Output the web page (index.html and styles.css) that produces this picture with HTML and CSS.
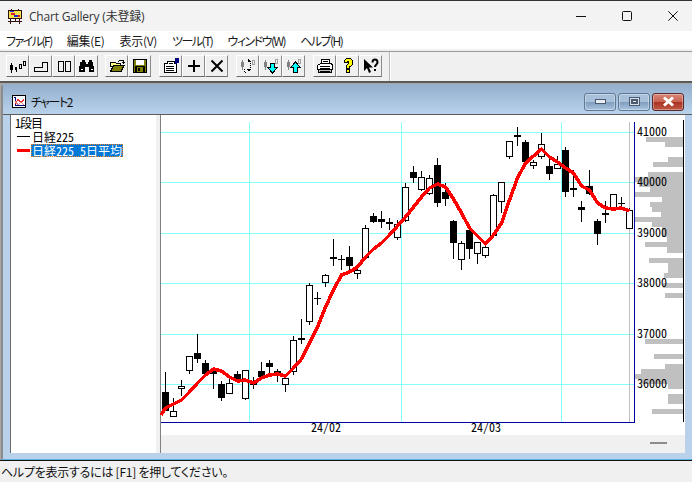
FILE: index.html
```html
<!DOCTYPE html>
<html lang="ja">
<head>
<meta charset="utf-8">
<title>Chart Gallery</title>
<link rel="stylesheet" href="styles.css">
</head>
<body>
<div class="app">
  <header class="titlebar">
    <svg class="app-icon" width="16" height="16" viewBox="0 0 16 16" shape-rendering="crispEdges"><path fill="#f4e04a" d="M2 3h12v7H2z"/><path fill="#e02020" d="M4 5h4v2H4zM10 7h3v2h-3z"/><path fill="#2030d0" d="M7 7h4v2H7zM3 3h4v1H3z"/><path fill="none" stroke="#301010" d="M1.500 2.500h13v8h-13zM4.500.5v2M11.500.5v2M3.500 10.500v5M12.500 10.500v5M1 13.500h14M8 10.500v3"/></svg>
    <span class="app-title">Chart Gallery (未登録)</span>
    <div class="window-controls">
      <span class="win-btn"><svg width="10" height="10" viewBox="0 0 10 10"><path d="M0 5.500h10" stroke="#111"/></svg></span>
      <span class="win-btn"><svg width="10" height="10" viewBox="0 0 10 10"><rect x=".5" y=".5" width="9" height="9" rx="1" fill="none" stroke="#111"/></svg></span>
      <span class="win-btn"><svg width="10" height="10" viewBox="0 0 10 10"><path d="M.3.300l9.400 9.400M9.700.300L.3 9.700" stroke="#111"/></svg></span>
    </div>
  </header>

  <nav class="menubar">
    <span class="menu-kana">ファイル(F)</span><span>編集(E)</span><span>表示(V)</span><span class="menu-kana">ツール(T)</span><span class="menu-kana">ウィンドウ(W)</span><span class="menu-kana">ヘルプ(H)</span>
  </nav>

  <div class="toolbar">
    <div class="tool-group tool-group-first">
      <span class="tool"><svg width="16" height="16" viewBox="0 0 16 16" shape-rendering="crispEdges"><path d="M1 5h1v2h1v5H2v3H1v-3H0V7h1zM5 9h2v3H5zM5.500 12v2h1v-2z"/><path fill="none" stroke="#000" d="M9.500 6.500h2v4h-2zM13.500 3.500h2v4h-2z"/></svg></span>
      <span class="tool"><svg width="16" height="16" viewBox="0 0 16 16" shape-rendering="crispEdges"><path fill="none" stroke="#000" d="M1.500 13.500h13v-9h-5v5h-8z"/></svg></span>
      <span class="tool"><svg width="16" height="16" viewBox="0 0 16 16" shape-rendering="crispEdges"><path fill="none" stroke="#000" d="M2.500 3.500h5v10h-5zM9.500 3.500h5v10h-5z"/></svg></span>
      <span class="tool"><svg width="16" height="16" viewBox="0 0 16 16" shape-rendering="crispEdges"><path d="M3 2h3v2h1v2h2V4h1V2h3v2h1v4h1v6H10V9H6v5H0V8h1V4h2z"/><path fill="#fff" d="M2 11h2v1H2zM12 11h2v1h-2z"/></svg></span>
    </div>
    <div class="tool-group">
      <span class="tool"><svg width="16" height="16" viewBox="0 0 16 16" shape-rendering="crispEdges"><path fill="#ffff80" stroke="#000" d="M1.500 4.500h5l1 1h4v3h-10z"/><path fill="#808000" stroke="#000" d="M1.500 13.500l3-6h10.500l-3 6z"/><path fill="none" stroke="#000" d="M9.500 3.500l2-1.500h2l1 1v2M13 4l1.500 1.500L16 4"/></svg></span>
      <span class="tool"><svg width="16" height="16" viewBox="0 0 16 16" shape-rendering="crispEdges"><path d="M1 1h14v14H1z"/><path fill="#808000" d="M2 2h12v12H2z"/><path fill="#fff" d="M4 2h8v5H4z"/><path d="M3 8h10v6H3z"/><path fill="#808000" d="M5 9h6v5H5z"/><path d="M6 10h2v3H6z"/></svg></span>
    </div>
    <div class="tool-group">
      <span class="tool"><svg width="16" height="16" viewBox="0 0 16 16" shape-rendering="crispEdges"><path fill="#fff" stroke="#000" d="M1.500 5.500h3v-2h7v2h2v9h-12z"/><path stroke="#000" d="M3 8.500h8M3 10.500h8M3 12.500h8M6 5.500h4"/><path fill="#000080" d="M12 0h4v5h-2v1h-2z"/></svg></span>
      <span class="tool"><svg width="16" height="16" viewBox="0 0 16 16" shape-rendering="crispEdges"><path d="M7 2h2v5h5v2H9v5H7V9H2V7h5z"/></svg></span>
      <span class="tool"><svg width="16" height="16" viewBox="0 0 16 16"><path d="M2.500 2.500l11 11M13.500 2.500l-11 11" stroke="#000" stroke-width="2"/></svg></span>
    </div>
    <div class="tool-group">
      <span class="tool"><svg width="16" height="16" viewBox="0 0 16 16" shape-rendering="crispEdges"><path fill="#808080" d="M2 2h1v2h1v5H3v3H2V9H1V4h1z"/><path fill="none" stroke="#a0a0a0" d="M12.500 2.500h2v4h-2z"/><path fill="none" stroke="#000" stroke-dasharray="1 1" d="M7.500 3.500h2M10.500 5v5M4 10.500v3.500h3"/><path d="M8 1h1v1h1v1h1v1H8zM7 11h4l-2 3z"/></svg></span>
      <span class="tool"><svg width="16" height="16" viewBox="0 0 16 16" shape-rendering="crispEdges"><path fill="#808080" d="M2 2h1v2h1v5H3v3H2V9H1V4h1z"/><path fill="none" stroke="#a0a0a0" d="M12.500 1.500h2v4h-2z"/><path fill="#00ffff" stroke="#000" d="M7.500 5.500h4v4h3l-5 5.500-5-5.500h3z"/></svg></span>
      <span class="tool"><svg width="16" height="16" viewBox="0 0 16 16" shape-rendering="crispEdges"><path fill="#808080" d="M2 2h1v2h1v5H3v3H2V9H1V4h1z"/><path fill="none" stroke="#a0a0a0" d="M12.500 1.500h2v4h-2z"/><path fill="#00ffff" stroke="#000" d="M7.500 14.500h4v-5h3l-5-5.500-5 5.500h3z"/></svg></span>
    </div>
    <div class="tool-group">
      <span class="tool"><svg width="16" height="16" viewBox="0 0 16 16" shape-rendering="crispEdges"><path fill="#fff" stroke="#000" d="M4.500 1.500h8v4h-8zM.5 7.500l3-2h11l1 2v4h-15z"/><path fill="#c0c0c0" stroke="#000" d="M1.500 11.500h13v3h-13z"/><path stroke="#000" d="M6 3.500h5M3 8.500h10M3 10.500h10M3 13h10"/></svg></span>
      <span class="tool"><svg width="16" height="16" viewBox="0 0 16 16" shape-rendering="crispEdges"><path fill="#ffff00" stroke="#000" d="M4.500 2.500l2-2h4l2 2v4l-2 2h-1v2h-3v-3l2-2v-2h-1v1h-3zM6.500 11.500h3v3h-3z"/></svg></span>
      <span class="tool"><svg width="16" height="16" viewBox="0 0 16 16"><path d="M1 1v12l3-3 2 5 2-1-2-4.500h4z"/><path fill="none" stroke="#000" stroke-width="2" d="M9.500 4.500c0-4 5-4 5 0 0 2-2.500 2-2.500 4.500"/><rect x="11" y="11" width="2" height="2"/></svg></span>
    </div>
    <span class="tool-sep"></span>
  </div>

  <main class="mdi">
    <section class="child">
      <div class="child-title">
        <svg class="child-icon" width="14" height="13" viewBox="0 0 14 13" shape-rendering="crispEdges"><path fill="#fff" stroke="#000" d="M.5.500h13v12H.5z"/><path fill="none" stroke="#000080" d="M2 2.500h1v8h10"/><path fill="none" stroke="#e03030" d="M3 8.500l3-4 3 3 3-3"/><path fill="none" stroke="#e08080" d="M3 6.500l3 3 3-2 3 2"/></svg>
        <span class="child-name">チャート2</span>
        <div class="child-controls">
          <span class="cbtn"><i class="glyph glyph-min"></i></span>
          <span class="cbtn"><i class="glyph glyph-max"></i></span>
          <span class="cbtn cbtn-close"><svg width="13" height="11" viewBox="0 0 13 11"><path d="M2 1.500l9 8M11 1.500l-9 8" stroke="#fff" stroke-width="3"/></svg></span>
        </div>
      </div>
      <div class="child-body">
        <aside class="legend">
          <div class="legend-row"><span class="legend-head">1段目</span></div>
          <div class="legend-row"><i class="swatch"></i><span class="legend-name">日経225</span></div>
          <div class="legend-row"><i class="swatch swatch-ma"></i><span class="legend-name legend-selected">日経225 5日平均</span></div>
        </aside>
        <div class="splitter"></div>
        <svg class="chart" width="525" height="338" viewBox="160 115 525 338">
          <rect x="160" y="435" width="525" height="18" fill="#f0f0f0"/>
          <g shape-rendering="crispEdges">
            <path d="M650 443h17" stroke="#8c8c8c" stroke-width="2"/>
            <path fill="#c0c0c0" d="M646 137h37v5h-37zM665 142h18v5h-18zM668 157h15v5h-15zM653 162h30v5h-30zM648 172h35v5h-35zM634 177h49v5h-49zM639 182h44v5h-44zM650 187h33v5h-33zM634 192h49v5h-49zM662 197h21v5h-21zM650 202h33v5h-33zM652 207h31v5h-31zM661 212h22v5h-22zM634 217h49v5h-49zM652 222h31v5h-31zM662 227h21v10h-21zM667 237h16v5h-16zM645 242h38v5h-38zM667 247h16v6h-16zM649 258h34v5h-34zM668 263h15v10h-15zM664 273h19v5h-19zM663 283h20v5h-20zM665 293h18v5h-18zM645 339h38v5h-38zM654 354h29v5h-29zM665 364h18v5h-18zM641 369h42v5h-42zM635 374h48v5h-48zM641 379h42v5h-42zM668 384h15v5h-15zM668 394h15v10h-15zM652 409h31v5h-31z"/>
            <path stroke="#88ffff" d="M161 132.500h473M161 182.500h473M161 233.500h473M161 283.500h473M161 334.500h473M161 384.500h473M249.500 122v300M401.500 122v300M561.500 122v300"/>
            <path stroke="#c0c0c0" d="M629.500 122v300"/>
            <path fill="none" stroke="#0000a0" d="M634.500 122v300.500H161"/>
            <path stroke="#000" d="M683.500 120v302"/>
            <path stroke="#808080" d="M160.500 115v338"/>
            <path stroke="#000" d="M165.500 372v38M173.500 398v19M181.500 380v16M189.500 356v18M197.500 334v29M205.500 360v14M213.500 368v21M221.500 381v20M229.500 378v15M237.500 371v12M245.500 370v30M253.500 377v12M261.500 362v15M269.500 360v15M277.500 369v13M285.500 378v14M293.500 336v39M301.500 319v25M309.500 283v42M317.500 292v13M314 298.500h7M325.500 274v13M333.500 239v27M341.500 255v15M338 259.500h7M349.500 246v24M357.500 266v13M365.500 225v32M373.500 213v10M381.500 211v17M389.500 218v12M397.500 220v20M405.500 183v39M413.500 166v17M421.500 171v20M429.500 175v20M437.500 158v49M445.500 183v23M453.500 220v39M461.500 241v29M469.500 230v29M477.500 242v22M485.500 243v15M493.500 194v41M501.500 182v31M509.500 141v18M517.500 127v19M525.500 140v22M533.500 160v9M541.500 133v26M549.500 157v23M557.500 156v13M565.500 147v50M573.500 170v27M581.500 201v21M589.500 170v25M597.500 219v26M605.500 201v22M613.500 194v14M621.500 197v12M618 203.500h7M629.500 208v20"/>
            <path fill="#fff" stroke="#000" d="M170.500 411.500h6v5h-6zM178.500 386.500h6v2h-6zM186.500 356.500h6v14h-6zM226.500 383.500h6v10h-6zM242.500 370.500h6v28h-6zM282.500 378.500h6v6h-6zM290.500 340.500h6v31h-6zM306.500 285.500h6v36h-6zM322.500 275.500h6v7h-6zM354.500 270.500h6v3h-6zM362.500 228.500h6v29h-6zM394.500 224.500h6v13h-6zM402.500 187.500h6v33h-6zM418.500 177.500h6v12h-6zM426.500 178.500h6v15h-6zM458.500 243.500h6v16h-6zM474.500 242.500h6v11h-6zM482.500 247.500h6v8h-6zM490.500 195.500h6v40h-6zM498.500 182.500h6v19h-6zM506.500 141.500h6v15h-6zM530.500 162.500h6v3h-6zM538.500 144.500h6v12h-6zM554.500 164.500h6v4h-6zM610.500 194.500h6v14h-6zM626.500 210.500h6v18h-6z"/>
            <path fill="#000" d="M162 392h7v19h-7zM194 353h7v6h-7zM202 363h7v11h-7zM210 370h7v4h-7zM218 384h7v14h-7zM234 374h7v6h-7zM250 382h7v3h-7zM258 371h7v6h-7zM266 363h7v4h-7zM274 371h7v3h-7zM298 338h7v2h-7zM330 257h7v2h-7zM346 257h7v9h-7zM370 216h7v6h-7zM378 219h7v3h-7zM386 222h7v2h-7zM410 172h7v6h-7zM434 165h7v38h-7zM442 192h7v7h-7zM450 221h7v22h-7zM466 230h7v19h-7zM514 135h7v2h-7zM522 142h7v20h-7zM546 166h7v8h-7zM562 150h7v42h-7zM570 188h7v2h-7zM578 207h7v3h-7zM586 186h7v8h-7zM594 221h7v13h-7zM602 213h7v2h-7z"/>
            <polyline fill="none" stroke="#ff0000" stroke-width="3.500" points="161,415 165.500,408 173.500,404 181.500,400 189.500,392 197.500,383 205.500,375 213.500,369 221.500,371 229.500,377 237.500,381 245.500,380 253.500,383 261.500,378 269.500,375 277.500,374 285.500,376 293.500,368 301.500,359 309.500,343 317.500,327 325.500,307 333.500,290 341.500,275 349.500,272 357.500,267 365.500,257 373.500,249 381.500,243 389.500,235 397.500,226 405.500,217 413.500,207 421.500,197 429.500,188 437.500,184 445.500,187 453.500,199 461.500,213 469.500,228 477.500,236 485.500,244 493.500,235 501.500,223 509.500,200 517.500,178 525.500,163 533.500,156 541.500,149 549.500,157 557.500,162 565.500,168 573.500,173 581.500,186 589.500,190 597.500,203 605.500,208 613.500,209 621.500,208 629.500,211"/>
          </g>
          <g class="axis-text">
            <text x="637" y="136">41000</text><text x="637" y="186">40000</text><text x="637" y="237">39000</text><text x="637" y="287">38000</text><text x="637" y="338">37000</text><text x="637" y="388">36000</text>
            <text x="311" y="432">24/02</text><text x="471" y="432">24/03</text>
          </g>
        </svg>
      </div>
    </section>
  </main>

  <footer class="statusbar">ヘルプを表示するには [F1] を押してください。</footer>
</div>
</body>
</html>
```

FILE: styles.css
```css
* { box-sizing: border-box; }
html, body { margin: 0; height: 100%; overflow: hidden; }
body {
  font-family: "Noto Sans CJK JP", sans-serif;
  font-size: 12px;
  color: #1a1a1a;
  background: #f0f0f0;
}
.app { display: flex; flex-direction: column; width: 692px; height: 482px; overflow: hidden; }

.titlebar {
  display: flex; align-items: center; height: 31px; flex: none;
  border-top: 1px solid #333; background: #f3f3f3; padding-left: 7px;
}
.app-icon { flex: none; }
.app-title { margin: 0 0 1px 6px; color: #333; font-family: "Open Sans", "Noto Sans CJK JP", sans-serif; letter-spacing: -.2px; }
.window-controls { display: flex; margin-left: auto; margin-right: -4px; }
.win-btn { display: flex; align-items: center; justify-content: center; width: 46px; height: 30px; }

.menubar {
  display: flex; gap: 15px; align-items: center; flex: none;
  height: 18px; padding-left: 6px; background: #fff; white-space: nowrap;
  font-feature-settings: "palt"; letter-spacing: -.3px;
}
.menu-kana { letter-spacing: -1.5px; }

.toolbar {
  display: flex; flex: none; height: 34px; padding: 6px 0 0 6px;
  background: linear-gradient(#f0f0f0 2px, #999 2px, #999 3px, #f0f0f0 3px);
  border-bottom: 2px solid #5a5a5a;
}
.tool-group { display: flex; margin-right: 8px; height: 22px; }
.tool-group-first { margin-right: 7px; }
.tool {
  display: flex; align-items: center; justify-content: center;
  width: 23px; height: 22px; background: #f0f0f0;
  border: 1px solid; border-color: #fff #8a8a8a #6a6a6a #fff;
}
.tool-sep {
  width: 2px; height: 29px; margin: -3px 0 0 -1px;
  border-left: 1px solid #b8b8b8; border-right: 1px solid #fff;
}

.mdi { flex: 1; min-height: 0; background: #a8a8a8; padding-top: 1px; }
.child {
  display: flex; flex-direction: column; height: 100%;
  padding: 0 7px 6px 7px; margin-left: 1px;
  background: #b9d1ea; border-top-left-radius: 4px;
  border-left: 2px solid #8c8c8c;
  border-bottom: 1px solid #57b5e0;
}
.child-title {
  display: flex; align-items: center; height: 31px; flex: none;
  margin: 0 -7px 0 -7px; padding: 5px 8px 0 9px;
  background: linear-gradient(#93afcc, #b9d2ec);
  border-bottom: 1px solid #5c5c5c;
}
.child-icon { flex: none; }
.child-name { margin-left: 5px; color: #111; font-feature-settings: "palt"; letter-spacing: -1.5px; }
.child-controls { display: flex; gap: 2px; margin-left: auto; }
.cbtn {
  display: flex; align-items: center; justify-content: center;
  width: 32px; height: 18px; border: 1px solid #5f7894; border-radius: 3px;
  background: linear-gradient(#a8c0da 0, #a8c0da 50%, #7f9cbc 50%, #a8c4e0 100%);
  box-shadow: inset 0 0 0 1px rgba(255,255,255,.35);
}
.cbtn-close { border-color: #5a2a2a; background: linear-gradient(#d88878 0, #c9604e 50%, #a83020 50%, #c05a48 100%); }
.glyph { display: block; background: #e8eef4; border: 1px solid #4a5a70; }
.glyph-min { width: 11px; height: 5px; }
.glyph-max { width: 11px; height: 9px; box-shadow: inset 0 0 0 1px #d8e0ea, inset 0 0 0 3px #4a5a70; }

.child-body { display: flex; flex: 1; min-height: 0; }
.legend {
  width: 146px; flex: none; padding-left: 5px; background: #fff;
  border-left: 1px solid #6a6a6a;
  font-feature-settings: "hwid"; color: #000;
}
.legend-row { display: flex; align-items: center; height: 14px; white-space: nowrap; }
.legend-head { margin-left: -1px; letter-spacing: -1px; }
.swatch { width: 13px; height: 1px; margin: 0 1px 0 1px; background: #000; }
.swatch-ma { height: 3px; background: #ff0000; }
.legend-name { padding: 0 1px; line-height: 13px; }
.legend-selected { background: #0078d7; color: #fff; outline: 1px dotted #f08020; outline-offset: -1px; }
.splitter { width: 4px; flex: none; background: #f0f0f0; }
.chart { display: block; flex: none; background: #fff; }
.axis-text text { font-size: 12px; font-feature-settings: "hwid"; fill: #000; }

.statusbar {
  flex: none; height: 22px; padding: 1px 0 0 1px; line-height: 20px;
  border-top: 1px solid #111; background: #f0f0f0; color: #111; white-space: nowrap;
  font-feature-settings: "palt"; letter-spacing: -.25px;
}
```
